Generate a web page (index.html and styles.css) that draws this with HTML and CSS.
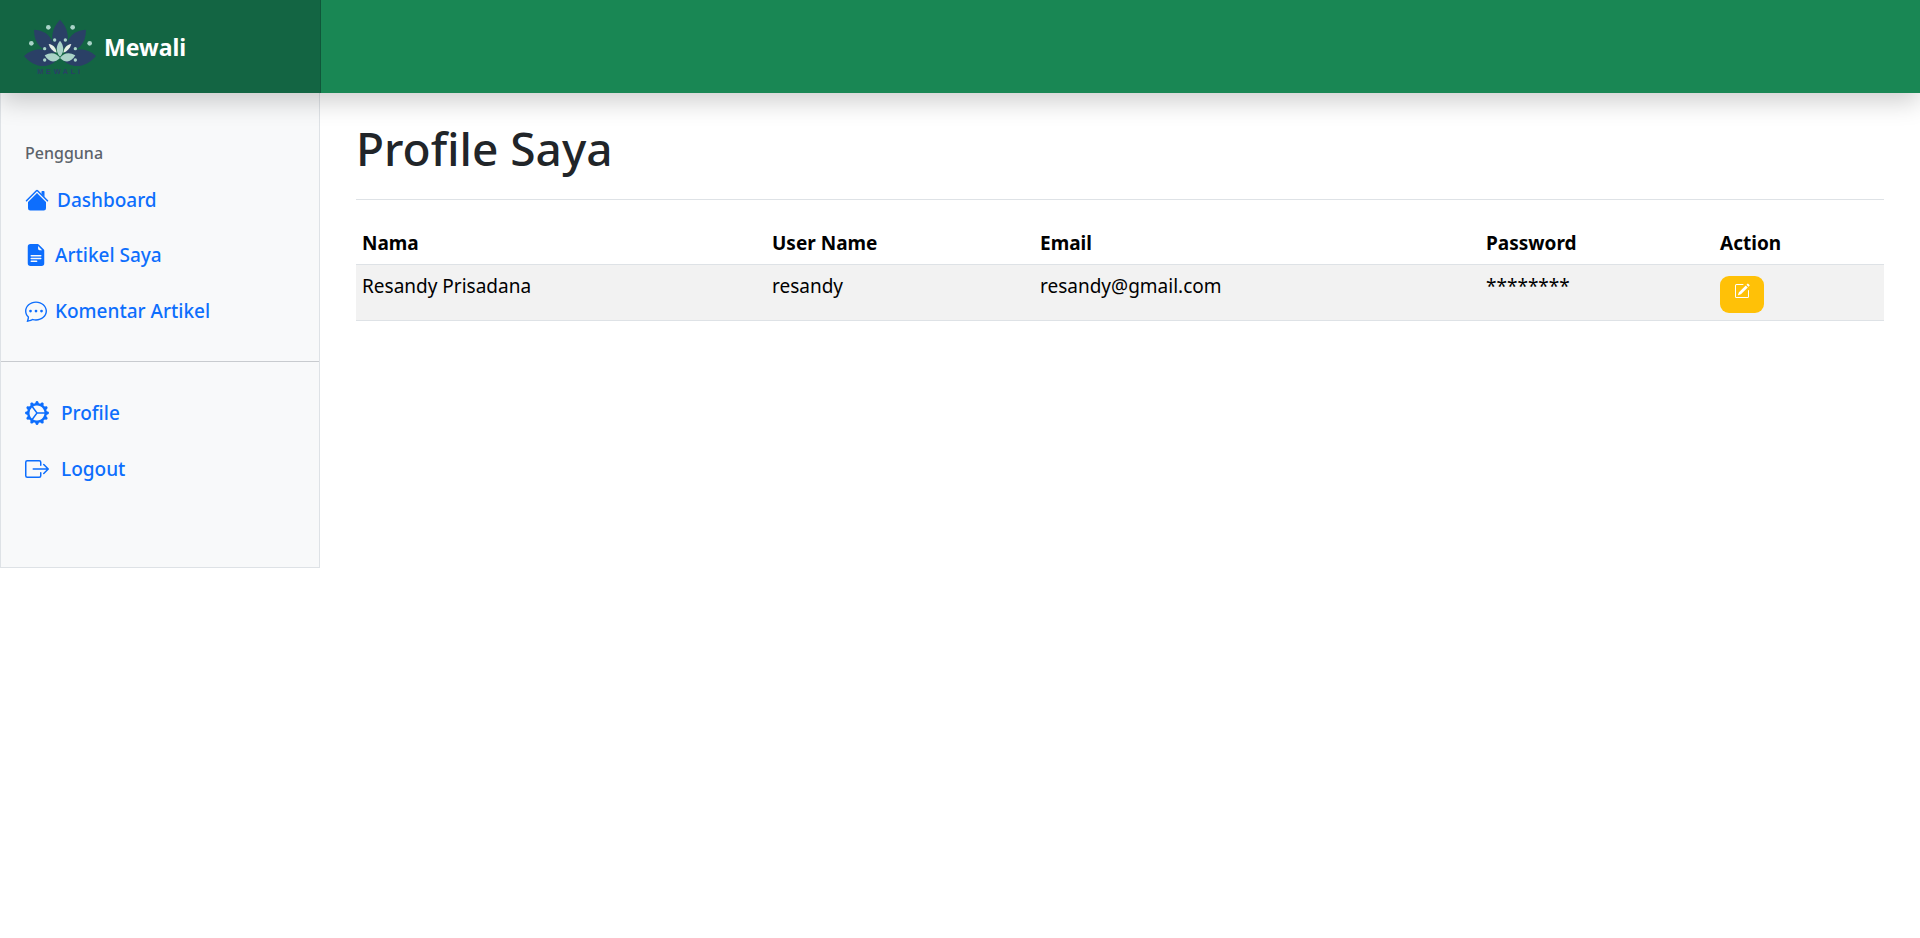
FILE: index.html
```html
<!DOCTYPE html>
<html lang="en">
<head>
    <meta charset="UTF-8">
    <title>Profile Saya - Mewali</title>
    <link rel="stylesheet" href="styles.css">
</head>
<body>
    <header class="topbar">
        <a class="brand" href="#">
            <svg class="logo" viewBox="42 30 216 180" aria-hidden="true">
                <g fill="#2a4066">
                    <path d="M150 35C126 60 120 92 134 116L150 135L166 116C180 92 174 60 150 35Z"/>
                    <path d="M72 65C108 68 130 84 136 136C96 130 72 108 72 65Z"/>
                    <path d="M228 65C192 68 170 84 164 136C204 130 228 108 228 65Z"/>
                    <path d="M42 144C72 116 112 116 146 150C118 186 72 180 42 144Z"/>
                    <path d="M258 144C228 116 188 116 154 150C182 186 228 180 258 144Z"/>
                </g>
                <g fill="#a9d3c8">
                    <circle cx="115" cy="58" r="7"/>
                    <circle cx="188" cy="58" r="7"/>
                    <circle cx="64" cy="106" r="7"/>
                    <circle cx="239" cy="106" r="7"/>
                    <circle cx="134" cy="96" r="5"/>
                    <circle cx="166" cy="96" r="5"/>
                    <circle cx="104" cy="122" r="5"/>
                    <circle cx="196" cy="122" r="5"/>
                    <circle cx="104" cy="156" r="5"/>
                    <circle cx="196" cy="156" r="5"/>
                    <path d="M150 98C137 114 137 132 150 146C163 132 163 114 150 98Z"/>
                    <path d="M104 142C124 130 140 136 150 150C132 168 116 162 104 142Z"/>
                    <path d="M196 142C176 130 160 136 150 150C168 168 184 162 196 142Z"/>
                </g>
                <g fill="#e6efe6">
                    <path d="M116 108C130 110 138 120 140 134C128 130 120 122 116 108Z"/>
                    <path d="M184 108C170 110 162 120 160 134C172 130 180 122 184 108Z"/>
                </g>
                <text class="logo-text" x="150" y="198" text-anchor="middle">MEWALI</text>
            </svg>
            <span>Mewali</span>
        </a>
    </header>

    <div class="wrapper">
        <aside class="sidebar">
            <div class="side-group">
                <h6 class="side-title">Pengguna</h6>
                <ul class="side-nav">
                    <li>
                        <a href="#">
                            <svg class="ico ico-24" viewBox="0 0 16 16" fill="currentColor"><path fill-rule="evenodd" d="m8 3.293 6 6V13.5a1.5 1.5 0 0 1-1.5 1.5h-9A1.5 1.5 0 0 1 2 13.5V9.293l6-6zm5-.793V6l-2-2V2.5a.5.5 0 0 1 .5-.5h1a.5.5 0 0 1 .5.5z"/><path fill-rule="evenodd" d="M7.293 1.5a1 1 0 0 1 1.414 0l6.647 6.646a.5.5 0 0 1-.708.708L8 2.207 1.354 8.854a.5.5 0 1 1-.708-.708L7.293 1.5z"/></svg>
                            Dashboard
                        </a>
                    </li>
                    <li>
                        <a href="#">
                            <svg class="ico ico-22" viewBox="0 0 16 16" fill="currentColor"><path d="M9.293 0H4a2 2 0 0 0-2 2v12a2 2 0 0 0 2 2h8a2 2 0 0 0 2-2V4.707A1 1 0 0 0 13.707 4L10 .293A1 1 0 0 0 9.293 0zM9.5 3.5v-2l3 3h-2a1 1 0 0 1-1-1zM4.5 9a.5.5 0 0 1 0-1h7a.5.5 0 0 1 0 1h-7zM4 10.5a.5.5 0 0 1 .5-.5h7a.5.5 0 0 1 0 1h-7a.5.5 0 0 1-.5-.5zm.5 2.5a.5.5 0 0 1 0-1h4a.5.5 0 0 1 0 1h-4z"/></svg>
                            Artikel Saya
                        </a>
                    </li>
                    <li>
                        <a href="#">
                            <svg class="ico ico-22" viewBox="0 0 16 16" fill="currentColor"><path d="M5 8a1 1 0 1 1-2 0 1 1 0 0 1 2 0zm4 0a1 1 0 1 1-2 0 1 1 0 0 1 2 0zm3 1a1 1 0 1 0 0-2 1 1 0 0 0 0 2z"/><path d="m2.165 15.803.02-.004c1.83-.363 2.948-.842 3.468-1.105A9.06 9.06 0 0 0 8 15c4.418 0 8-3.134 8-7s-3.582-7-8-7-8 3.134-8 7c0 1.76.743 3.37 1.97 4.6a10.437 10.437 0 0 1-.524 2.318l-.003.011a10.722 10.722 0 0 1-.244.637c-.079.186.074.394.273.362a21.673 21.673 0 0 0 .693-.125zm.8-3.108a1 1 0 0 0-.287-.801C1.618 10.83 1 9.468 1 8c0-3.192 3.004-6 7-6s7 2.808 7 6c0 3.193-3.004 6-7 6a8.06 8.06 0 0 1-2.088-.272 1 1 0 0 0-.711.074c-.387.196-1.24.57-2.634.893a10.97 10.97 0 0 0 .398-2z"/></svg>
                            Komentar Artikel
                        </a>
                    </li>
                </ul>
            </div>
            <hr class="side-line">
            <ul class="side-nav side-nav-bottom">
                <li>
                    <a href="#">
                        <svg class="ico ico-24" viewBox="0 0 16 16" fill="currentColor"><path d="M7.068.727c.243-.97 1.62-.97 1.864 0l.071.286a.96.96 0 0 0 1.622.434l.205-.211c.695-.719 1.888-.03 1.613.931l-.08.284a.96.96 0 0 0 1.187 1.187l.283-.081c.96-.275 1.65.918.931 1.613l-.211.205a.96.96 0 0 0 .434 1.622l.286.071c.97.243.97 1.62 0 1.864l-.286.071a.96.96 0 0 0-.434 1.622l.211.205c.719.695.03 1.888-.931 1.613l-.284-.08a.96.96 0 0 0-1.187 1.187l.081.283c.275.96-.918 1.65-1.613.931l-.205-.211a.96.96 0 0 0-1.622.434l-.071.286c-.243.97-1.62.97-1.864 0l-.071-.286a.96.96 0 0 0-1.622-.434l-.205.211c-.695.719-1.888.03-1.613-.931l.08-.284a.96.96 0 0 0-1.186-1.187l-.284.081c-.96.275-1.65-.918-.931-1.613l.211-.205a.96.96 0 0 0-.434-1.622l-.286-.071c-.97-.243-.97-1.62 0-1.864l.286-.071a.96.96 0 0 0 .434-1.622l-.211-.205c-.719-.695-.03-1.888.931-1.613l.284.08a.96.96 0 0 0 1.187-1.186l-.081-.284c-.275-.96.918-1.65 1.613-.931l.205.211a.96.96 0 0 0 1.622-.434l.071-.286zM12.973 8.5H8.25l-2.834 3.779A4.998 4.998 0 0 0 12.973 8.5zm0-1a4.998 4.998 0 0 0-7.557-3.779l2.834 3.78h4.723zM5.048 3.967c-.03.021-.058.043-.087.065l.087-.065zm-.431.355A4.984 4.984 0 0 0 3.002 8c0 1.455.622 2.765 1.615 3.678L7.375 8 4.617 4.322zm.344 7.646.087.065-.087-.065z"/></svg>
                        Profile
                    </a>
                </li>
                <li>
                    <a href="#">
                        <svg class="ico ico-24" viewBox="0 0 16 16" fill="currentColor"><path fill-rule="evenodd" d="M10 12.5a.5.5 0 0 1-.5.5h-8a.5.5 0 0 1-.5-.5v-9a.5.5 0 0 1 .5-.5h8a.5.5 0 0 1 .5.5v2a.5.5 0 0 0 1 0v-2A1.5 1.5 0 0 0 9.5 2h-8A1.5 1.5 0 0 0 0 3.5v9A1.5 1.5 0 0 0 1.5 14h8a1.5 1.5 0 0 0 1.5-1.5v-2a.5.5 0 0 0-1 0v2z"/><path fill-rule="evenodd" d="M15.854 8.354a.5.5 0 0 0 0-.708l-3-3a.5.5 0 0 0-.708.708L14.293 7.5H5.5a.5.5 0 0 0 0 1h8.793l-2.147 2.146a.5.5 0 0 0 .708.708l3-3z"/></svg>
                        Logout
                    </a>
                </li>
            </ul>
        </aside>

        <main class="content">
            <h1 class="page-title">Profile Saya</h1>
            <hr class="title-line">
            <table class="profile-table">
                <colgroup>
                    <col class="col-name">
                    <col class="col-user">
                    <col class="col-email">
                    <col class="col-pass">
                    <col class="col-action">
                </colgroup>
                <thead>
                    <tr>
                        <th>Nama</th>
                        <th>User Name</th>
                        <th>Email</th>
                        <th>Password</th>
                        <th>Action</th>
                    </tr>
                </thead>
                <tbody>
                    <tr>
                        <td>Resandy Prisadana</td>
                        <td>resandy</td>
                        <td>resandy@gmail.com</td>
                        <td>********</td>
                        <td>
                            <a class="btn-edit" href="#">
                                <svg class="ico-edit" viewBox="0 0 16 16" fill="currentColor"><path d="M15.502 1.94a.5.5 0 0 1 0 .706L14.459 3.69l-2-2L13.502.646a.5.5 0 0 1 .707 0l1.293 1.293zm-1.75 2.456-2-2L4.939 9.21a.5.5 0 0 0-.121.196l-.805 2.414a.25.25 0 0 0 .316.316l2.414-.805a.5.5 0 0 0 .196-.12l6.813-6.814z"/><path fill-rule="evenodd" d="M1 13.5A1.5 1.5 0 0 0 2.5 15h11a1.5 1.5 0 0 0 1.5-1.5v-6a.5.5 0 0 0-1 0v6a.5.5 0 0 1-.5.5h-11a.5.5 0 0 1-.5-.5v-11a.5.5 0 0 1 .5-.5H9a.5.5 0 0 0 0-1H2.5A1.5 1.5 0 0 0 1 2.5v11z"/></svg>
                            </a>
                        </td>
                    </tr>
                </tbody>
            </table>
        </main>
    </div>
</body>
</html>
```

FILE: styles.css
```css
body {
    margin: 0;
    font-family: "Noto Sans", "Open Sans", sans-serif;
    font-size: 19px;
    color: #000;
    background: #fff;
}

a {
    text-decoration: none;
}

.topbar {
    position: relative;
    z-index: 10;
    height: 93px;
    background: #198754;
    box-shadow: 0 8px 24px rgba(0, 0, 0, 0.2);
}

.brand {
    display: flex;
    align-items: center;
    gap: 8px;
    box-sizing: border-box;
    width: 321px;
    height: 93px;
    padding-left: 24px;
    background: #136543;
    border-right: 1px solid #10573a;
    color: #fff;
    font-size: 23px;
    font-weight: 700;
}

.logo {
    width: 72px;
    height: 60px;
    margin-top: 2px;
}

.logo-text {
    font-family: "Liberation Sans", sans-serif;
    font-size: 22px;
    font-weight: 700;
    letter-spacing: 8px;
    fill: #2a4066;
}

.wrapper {
    display: flex;
    align-items: flex-start;
}

.sidebar {
    box-sizing: border-box;
    flex: 0 0 320px;
    width: 320px;
    height: 475px;
    background: #f8f9fa;
    border: 1px solid #dee2e6;
    border-top: 0;
}

.side-group {
    padding: 48px 24px 0;
}

.side-title {
    margin: 0 0 7px;
    font-size: 16px;
    font-weight: 500;
    line-height: 24px;
    color: #5c636a;
}

.side-nav {
    margin: 0;
    padding: 0;
    list-style: none;
}

.side-nav li {
    height: 55.5px;
    display: flex;
    align-items: center;
}

.side-nav a {
    display: flex;
    align-items: center;
    gap: 8px;
    color: #0d6efd;
    font-size: 19px;
    font-weight: 500;
}

.ico {
    display: block;
    flex: none;
}

.ico-24 {
    width: 24px;
    height: 24px;
}

.ico-22 {
    width: 22px;
    height: 22px;
}

.side-line {
    margin: 22px 0 0;
    border: 0;
    border-top: 1px solid #c8cbcf;
}

.side-nav-bottom {
    padding: 24px 24px 0;
}

.side-nav-bottom a {
    gap: 12px;
}

.content {
    flex: 1;
    min-width: 0;
    padding: 0 36px;
}

.page-title {
    margin: 26px 0 0;
    font-size: 46px;
    font-weight: 500;
    line-height: 58px;
    color: #212529;
}

.title-line {
    margin: 22px 0 0;
    border: 0;
    border-top: 1px solid #dee2e6;
}

.profile-table {
    width: 100%;
    margin-top: 22px;
    border-collapse: collapse;
    table-layout: fixed;
}

.col-name {
    width: 410px;
}

.col-user {
    width: 268px;
}

.col-email {
    width: 446px;
}

.col-pass {
    width: 234px;
}

.col-action {
    width: 170px;
}

.profile-table th {
    padding: 8px 6px;
    text-align: left;
    font-weight: 700;
    border-bottom: 1px solid #dee2e6;
}

.profile-table td {
    padding: 8px 6px 7px;
    vertical-align: top;
    background: #f2f2f2;
    border-bottom: 1px solid #dee2e6;
}

.btn-edit {
    display: flex;
    align-items: flex-start;
    justify-content: center;
    box-sizing: border-box;
    width: 44px;
    height: 37px;
    margin-top: 3px;
    padding-top: 7px;
    background: #ffc107;
    border-radius: 9px;
    color: #fff;
}

.ico-edit {
    width: 16px;
    height: 16px;
}
```
